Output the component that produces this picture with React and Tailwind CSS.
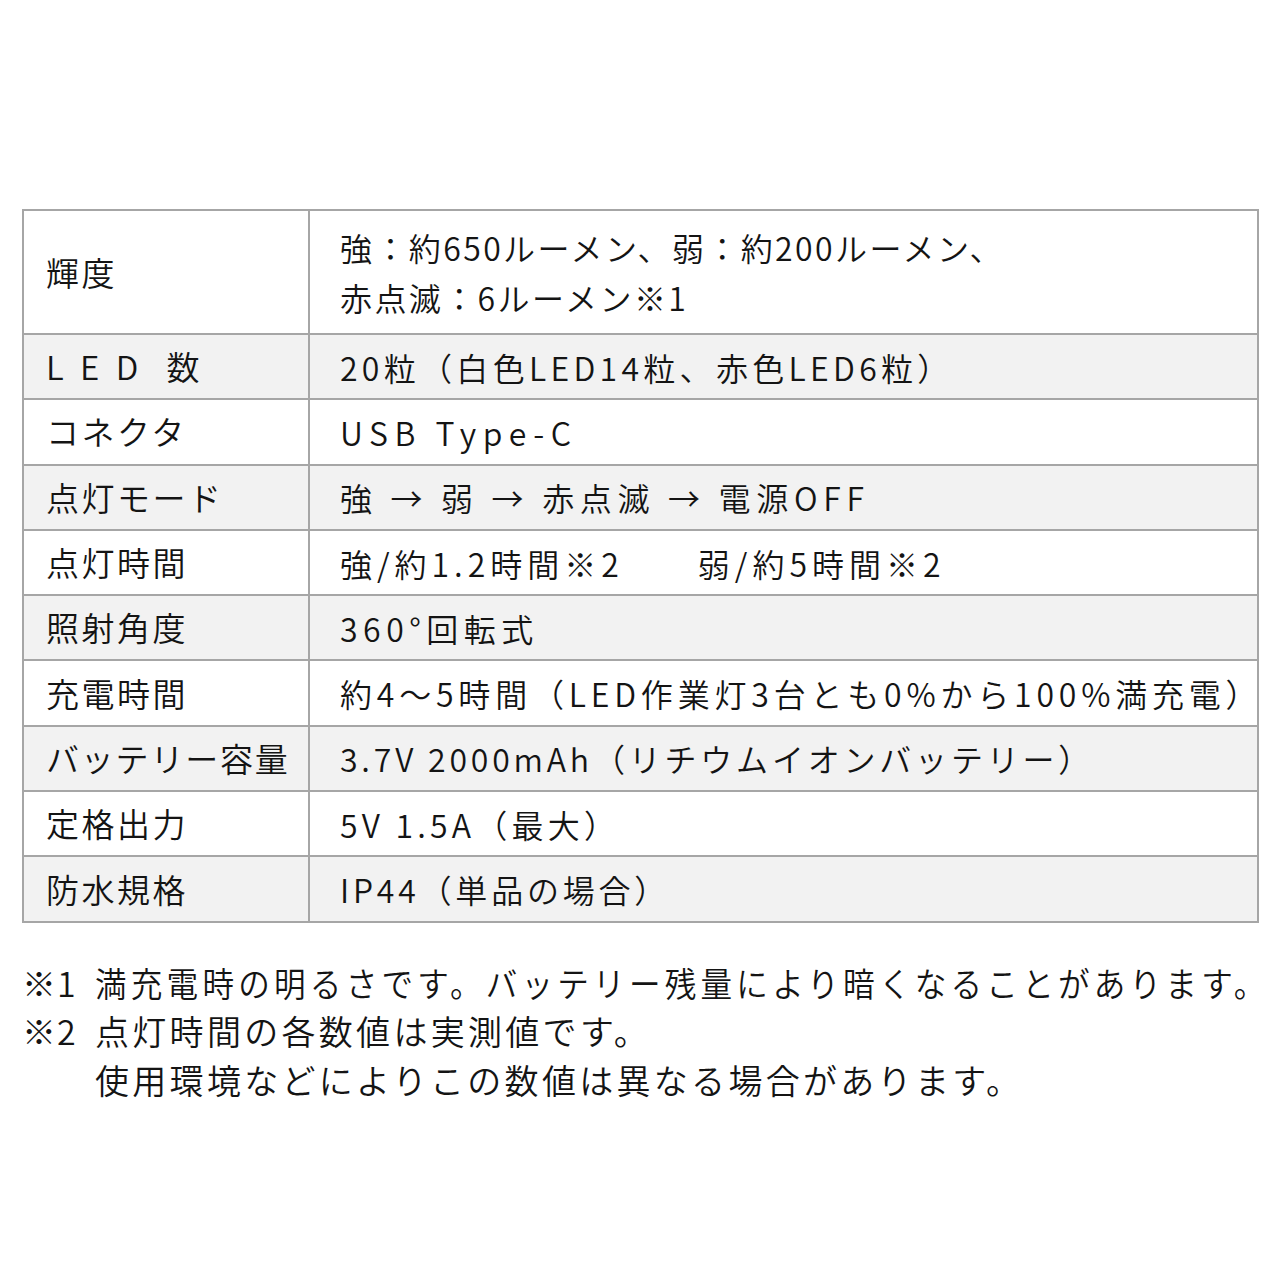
import React from "react";

const rows = [
  {
    label: "輝度",
    lt: "tracking-[2.5px]",
    value: ["強：約650ルーメン、弱：約200ルーメン、", "赤点滅：6ルーメン※1"],
    vt: "tracking-[2.4px]",
    tall: true,
  },
  { label: "L E D  数", lt: "tracking-[4.5px]", value: ["20粒（白色LED14粒、赤色LED6粒）"], vt: "tracking-[4.3px]" },
  { label: "コネクタ", lt: "tracking-[2.5px]", value: ["USB Type-C"], vt: "tracking-[6.5px]" },
  { label: "点灯モード", lt: "tracking-[2.5px]", value: ["強 → 弱 → 赤点滅 → 電源OFF"], vt: "tracking-[5.7px]" },
  { label: "点灯時間", lt: "tracking-[2.5px]", value: ["強/約1.2時間※2　　弱/約5時間※2"], vt: "tracking-[5px]" },
  { label: "照射角度", lt: "tracking-[2.5px]", value: ["360°回転式"], vt: "tracking-[5.5px]" },
  { label: "充電時間", lt: "tracking-[2.5px]", value: ["約4〜5時間（LED作業灯3台とも0%から100%満充電）"], vt: "tracking-[4.8px]" },
  { label: "バッテリー容量", lt: "tracking-[1.8px]", value: ["3.7V 2000mAh（リチウムイオンバッテリー）"], vt: "tracking-[3.8px]" },
  { label: "定格出力", lt: "tracking-[2.5px]", value: ["5V 1.5A（最大）"], vt: "tracking-[4.2px]" },
  { label: "防水規格", lt: "tracking-[2.5px]", value: ["IP44（単品の場合）"], vt: "tracking-[3.8px]" },
];

export default function App() {
  return (
    <div
      className="w-[1280px] h-[1280px] bg-white text-[#141414] font-[350]"
      style={{ fontFamily: '"Noto Sans CJK JP", "Noto Sans", sans-serif' }}
    >
      <div className="pt-[209px] pl-[22px]">
        <div className="w-[1237px] border-2 border-[#a6a6a6]">
          {rows.map((r, i) => (
            <div
              key={i}
              className={`flex ${i > 0 ? "border-t-2 border-[#a6a6a6]" : ""} ${
                i % 2 === 1 ? "bg-[#f2f2f2]" : "bg-white"
              } ${r.tall ? "h-[122px]" : "h-[65.3px]"}`}
            >
              <div
                className={`w-[286px] shrink-0 border-r-2 border-[#a6a6a6] flex items-center pl-[22px] text-[33px] leading-none whitespace-pre ${r.lt}`}
              >
                {r.label}
              </div>
              <div
                className={`flex-1 flex flex-col justify-center pl-[30px] text-[32px] leading-[50px] whitespace-pre ${r.vt}`}
              >
                {r.value.map((v, j) => (
                  <div key={j}>{v}</div>
                ))}
              </div>
            </div>
          ))}
        </div>
      </div>
      <div className="pl-[22px] pt-[36px] text-[34px] leading-[48.5px]">
        <div className="flex whitespace-nowrap">
          <span className="w-[73px] shrink-0 tracking-[1px]">※1</span>
          <span className="inline-block origin-left scale-x-[0.93] tracking-[4.5px]">
            満充電時の明るさです。バッテリー残量により暗くなることがあります。
          </span>
        </div>
        <div className="flex whitespace-nowrap">
          <span className="w-[73px] shrink-0 tracking-[1px]">※2</span>
          <div className="tracking-[3.3px]">
            <div>点灯時間の各数値は実測値です。</div>
            <div>使用環境などによりこの数値は異なる場合があります。</div>
          </div>
        </div>
      </div>
    </div>
  );
}
